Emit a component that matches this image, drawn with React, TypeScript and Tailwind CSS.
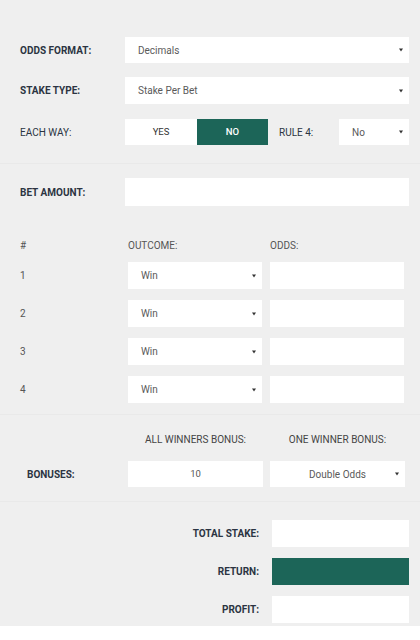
import React from "react";

const font = { fontFamily: "Roboto, 'Noto Sans', Arial, sans-serif" };

function Caret() {
  return (
    <span className="inline-block w-0 h-0 border-l-[2.5px] border-r-[2.5px] border-t-[3px] border-l-transparent border-r-transparent border-t-[#333]" />
  );
}

function Select({ value, className, center }: { value: string; className: string; center?: boolean }) {
  return (
    <div className={`relative bg-white flex items-center text-[10px] text-[#5a5a5a] ${className}`}>
      <span className={center ? "flex-1 text-center" : "flex-1 pl-[13px]"}>{value}</span>
      <span className="absolute right-[6px] top-1/2 -translate-y-1/2 flex">
        <Caret />
      </span>
    </div>
  );
}

export default function App() {
  const rows = ["1", "2", "3", "4"];
  return (
    <div style={font} className="w-[420px] h-[626px] bg-[#efefef] text-[#2b3442]">
      {/* Section 1 */}
      <div className="pt-[37px] pb-[18px] pl-[20px] pr-[11px] flex flex-col gap-[14px]">
        <div className="flex items-center h-[26px]">
          <div className="w-[105px] text-[10px] font-bold">ODDS FORMAT:</div>
          <Select value="Decimals" className="flex-1 h-[26px]" />
        </div>
        <div className="flex items-center h-[27px]">
          <div className="w-[105px] text-[10px] font-bold">STAKE TYPE:</div>
          <Select value="Stake Per Bet" className="flex-1 h-[27px]" />
        </div>
        <div className="flex items-center h-[26px] mt-[1px]">
          <div className="w-[105px] text-[10px]">EACH WAY:</div>
          <div className="w-[72px] h-[26px] bg-white flex items-center justify-center text-[9.5px] text-[#333]">YES</div>
          <div className="w-[71px] h-[26px] bg-[#1c6558] flex items-center justify-center text-[9.5px] font-medium text-white">NO</div>
          <div className="w-[71px] pl-[11px] text-[10px]">RULE 4:</div>
          <Select value="No" className="flex-1 h-[26px]" />
        </div>
      </div>

      {/* Section 2 */}
      <div className="border-t border-[#e9e9e9] pt-[14px] pb-[11px] pl-[20px] pr-[11px]">
        <div className="flex items-center h-[28px]">
          <div className="w-[105px] text-[10px] font-bold">BET AMOUNT:</div>
          <div className="flex-1 h-[28px] bg-white" />
        </div>
        <div className="flex items-center h-[12px] mt-[33px] text-[10px] text-[#555]">
          <div className="w-[108px]">#</div>
          <div className="w-[142px]">OUTCOME:</div>
          <div>ODDS:</div>
        </div>
        <div className="mt-[11px] flex flex-col gap-[11px]">
          {rows.map((r) => (
            <div key={r} className="flex items-center h-[27px]">
              <div className="w-[108px] text-[10px] text-[#555]">{r}</div>
              <Select value="Win" className="w-[134px] h-[27px]" />
              <div className="w-[134px] h-[27px] bg-white ml-[8px]" />
            </div>
          ))}
        </div>
      </div>

      {/* Section 3 */}
      <div className="border-t border-[#e9e9e9] pt-[18px] pb-[14px] pl-[27px] pr-[15px]">
        <div className="flex items-center h-[12px] text-[10px] text-[#444]">
          <div className="w-[101px]" />
          <div className="w-[135px] text-center">ALL WINNERS BONUS:</div>
          <div className="w-[135px] ml-[7px] text-center">ONE WINNER BONUS:</div>
        </div>
        <div className="flex items-center h-[26px] mt-[16px]">
          <div className="w-[101px] text-[10px] font-bold">BONUSES:</div>
          <div className="w-[135px] h-[26px] bg-white flex items-center justify-center text-[9.5px] text-[#555]">10</div>
          <Select value="Double Odds" center className="w-[135px] h-[26px] ml-[7px]" />
        </div>
      </div>

      {/* Section 4 */}
      <div className="border-t border-[#e9e9e9] pt-[18px] pr-[11px] flex flex-col gap-[11px]">
        {[
          { l: "TOTAL STAKE:", g: false },
          { l: "RETURN:", g: true },
          { l: "PROFIT:", g: false },
        ].map((x) => (
          <div key={x.l} className="flex items-center h-[27px]">
            <div className="w-[259px] text-right text-[10px] font-bold">{x.l}</div>
            <div className={`ml-[13px] flex-1 h-[27px] ${x.g ? "bg-[#1c6558]" : "bg-white"}`} />
          </div>
        ))}
      </div>
    </div>
  );
}
